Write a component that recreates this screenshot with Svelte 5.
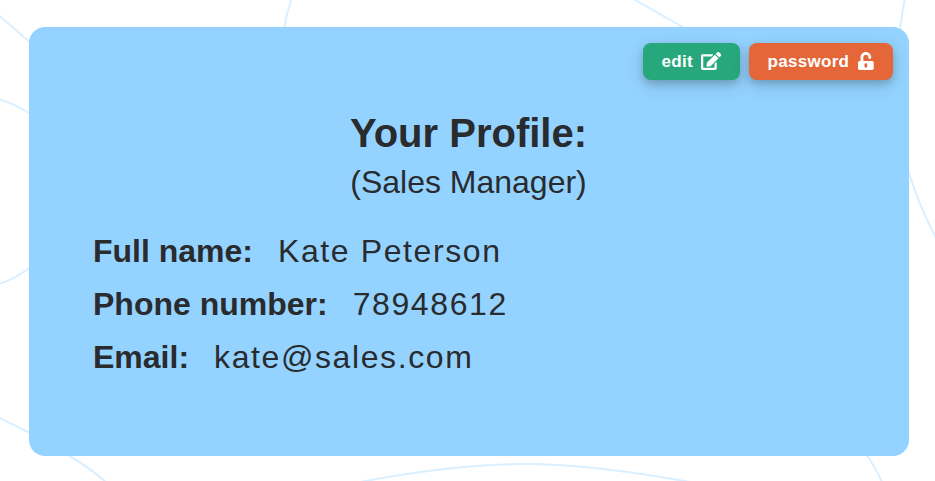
<script>
  const role = 'Sales Manager';
  const details = [
    { label: 'Full name:', value: 'Kate Peterson' },
    { label: 'Phone number:', value: '78948612' },
    { label: 'Email:', value: 'kate@sales.com' }
  ];
</script>

<main class="page">
  <svg class="waves" width="935" height="481" viewBox="0 0 935 481" aria-hidden="true">
    <path d="M-2 14.500L32 44M-2 99Q14 103 32 115M-2 284Q14 280 32 266M-2 417L32 434M66 454Q86 465 106 482M284 30Q286 14 292 -2M632 -2L686 29M905 -2Q902 12 900 30M908 170Q918 203 936 238M866 454Q874 465 882 482M360 482Q455 464 526 464Q590 464 690 482" />
  </svg>
  <section class="card">
    <div class="actions">
      <button class="edit">
        <span>edit</span>
        <svg width="20.25" height="18" viewBox="0 0 576 512"><path d="M402.6 83.2l90.2 90.2c3.8 3.8 3.8 10 0 13.8L274.4 405.6l-92.8 10.3c-12.4 1.4-22.9-9.1-21.5-21.5l10.3-92.8L388.8 83.2c3.8-3.8 10-3.8 13.8 0zm162-22.9l-48.8-48.8c-15.2-15.2-39.9-15.2-55.2 0l-35.4 35.4c-3.8 3.8-3.8 10 0 13.8l90.2 90.2c3.8 3.8 10 3.8 13.8 0l35.4-35.4c15.2-15.3 15.2-40 0-55.2zM384 346.2V448H64V128h229.8c3.2 0 6.2-1.3 8.5-3.5l40-40c7.6-7.6 2.2-20.5-8.5-20.5H48C21.500 64 0 85.500 0 112v352c0 26.500 21.500 48 48 48h352c26.500 0 48-21.500 48-48V306.200c0-10.700-12.900-16-20.500-8.500l-40 40c-2.200 2.300-3.500 5.300-3.500 8.500z" /></svg>
      </button>
      <button class="password">
        <span>password</span>
        <svg width="15.75" height="18" viewBox="0 0 448 512"><path d="M400 256H152V152.900c0-39.600 31.700-72.500 71.300-72.900 40-.4 72.700 32.100 72.700 72v16c0 13.300 10.700 24 24 24h32c13.300 0 24-10.700 24-24v-16C376 68 307.500-.3 223.500 0 139.500.3 72 69.500 72 153.500V256H48c-26.500 0-48 21.500-48 48v160c0 26.500 21.500 48 48 48h352c26.500 0 48-21.500 48-48V304c0-26.500-21.500-48-48-48zM264 408c0 22.100-17.900 40-40 40s-40-17.900-40-40v-48c0-22.100 17.900-40 40-40s40 17.900 40 40v48z" /></svg>
      </button>
    </div>
    <header>
      <h1>Your Profile:</h1>
      <p>({role})</p>
    </header>
    <dl>
      {#each details as item}
        <div class="row">
          <dt>{item.label}</dt>
          <dd>{item.value}</dd>
        </div>
      {/each}
    </dl>
  </section>
</main>

<style>
  :global(body) { background: #fff; }
  .page {
    position: relative;
    box-sizing: border-box;
    width: 935px;
    height: 481px;
    padding: 27px 26px 25px 29px;
    overflow: hidden;
    color: #292b2e;
    font-family: "Liberation Sans", Arial, sans-serif;
  }
  .waves { position: absolute; inset: 0; fill: none; stroke: #daefff; stroke-width: 2; }
  .card {
    position: relative;
    box-sizing: border-box;
    height: 429px;
    padding: 16px;
    border-radius: 16px;
    background: #94d3ff;
  }
  .actions { display: flex; justify-content: flex-end; gap: 9px; height: 37px; }
  button {
    display: flex;
    align-items: center;
    justify-content: space-between;
    box-sizing: border-box;
    height: 37px;
    padding: 0 18.500px;
    border: 0;
    border-radius: 8px;
    color: #fff;
    font: bold 17px "Liberation Sans", Arial, sans-serif;
    letter-spacing: .3px;
    box-shadow: 0 4px 8px rgba(0, 0, 0, .2), 0 6px 20px rgba(0, 0, 0, .1);
  }
  button svg { margin-bottom: 1px; fill: currentColor; }
  .edit { width: 97px; background: #27a77c; }
  .password { width: 144px; padding-right: 19px; background: #e56638; }
  header { padding: 29px 1px 0 0; text-align: center; }
  h1 { margin: 0; font-size: 40px; line-height: 48px; }
  p { margin: 0; font-size: 32px; line-height: 50px; }
  dl { margin: 18px 48px 0; font-size: 32px; }
  .row { display: flex; gap: 25px; height: 53px; align-items: center; }
  dt { font-weight: bold; }
  dd { margin: 0; letter-spacing: 1.6px; }
</style>
